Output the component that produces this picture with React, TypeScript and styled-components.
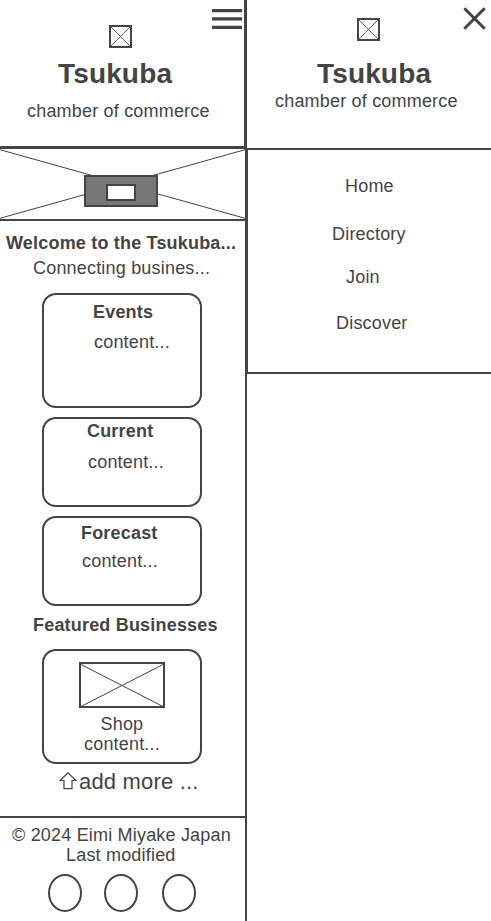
import React from 'react';
import styled, { createGlobalStyle } from 'styled-components';

const ink = '#444444';

const GlobalStyle = createGlobalStyle`
  * { box-sizing: border-box; }
  body { margin: 0; background: #fff; overflow: hidden; }
`;

const Page = styled.div`
  display: grid;
  grid-template-columns: 247px 1fr;
  height: 921px;
  overflow: hidden;
  background: #fff;
  color: ${ink};
  font-family: 'Liberation Sans', Arial, sans-serif;
  font-size: 18px;
  line-height: 20px;
`;

const Screen = styled.div`
  display: flex;
  flex-direction: column;
  min-width: 0;
`;

const Header = styled.header<{ $menu?: boolean }>`
  position: relative;
  flex: none;
  display: flex;
  flex-direction: column;
  height: ${p => (p.$menu ? 150 : 149)}px;
  padding-top: ${p => (p.$menu ? 18 : 25)}px;
  border: 0 solid ${ink};
  border-width: ${p => (p.$menu ? '0 0 2px 0' : '0 3px 3px 0')};
`;

const Logo = styled.svg<{ $left: number }>`
  display: block;
  flex: none;
  width: 23px;
  height: 23px;
  margin-left: ${p => p.$left}px;
`;

const IconButton = styled.button<{ $top: number; $right: number }>`
  position: absolute;
  top: ${p => p.$top}px;
  right: ${p => p.$right}px;
  padding: 0;
  border: 0;
  background: none;
  color: inherit;
  line-height: 0;
`;

const Brand = styled.h1<{ $top: number; $left: number }>`
  margin: ${p => p.$top}px 0 0 ${p => p.$left}px;
  font-size: 28px;
  line-height: 32px;
  letter-spacing: 0.15px;
  white-space: nowrap;
`;

const Line = styled.p<{ $top?: number; $left: number; $track?: number }>`
  margin: ${p => p.$top ?? 0}px 0 0 ${p => p.$left}px;
  letter-spacing: ${p => p.$track ?? 0.19}px;
  white-space: nowrap;
`;

const Heading = styled(Line).attrs({ as: 'h2' })`
  font-size: 18px;
  font-weight: bold;
`;

const Body = styled.main`
  flex: 1;
  display: flex;
  flex-direction: column;
  border-right: 2px solid ${ink};
`;

const Hero = styled.section`
  display: grid;
  height: 72px;
  border-bottom: 2px solid ${ink};
  > * { grid-area: 1 / 1; }
`;

const HeroLines = styled.svg`
  display: block;
  width: 245px;
  height: 70px;
`;

const HeroBadge = styled.div`
  display: flex;
  width: 74px;
  height: 32px;
  margin: 26px 0 0 84px;
  padding: 7px 0 0 20px;
  border: 2px solid ${ink};
  background: #777;
`;

const HeroSlot = styled.div`
  width: 30px;
  height: 17px;
  border: 2px solid ${ink};
  background: #fff;
`;

const Card = styled.article<{ $top: number; $height: number }>`
  flex: none;
  width: 160px;
  height: ${p => p.$height}px;
  margin: ${p => p.$top}px 0 0 42px;
  border: 2px solid ${ink};
  border-radius: 14px;
`;

const Thumb = styled.svg`
  display: block;
  width: 86px;
  height: 46px;
  margin: 11px 0 0 35px;
`;

const AddMore = styled.div`
  display: flex;
  margin: 5px 0 0 59px;
  font-size: 22px;
  line-height: 26px;
  letter-spacing: 0.18px;
  white-space: nowrap;
`;

const Arrow = styled.svg`
  flex: none;
  width: 18px;
  height: 20px;
  margin: 2px 2px 0 0;
`;

const Footer = styled.footer`
  height: 105px;
  margin-top: auto;
  padding-top: 7px;
  border-top: 2px solid ${ink};
`;

const Socials = styled.div`
  display: grid;
  grid-template-columns: 56px 58px 34px;
  margin: 9px 0 0 48px;
`;

const Social = styled.span`
  width: 34px;
  height: 38px;
  border: 2px solid ${ink};
  border-radius: 50%;
`;

const Nav = styled.nav`
  height: 224px;
  padding-top: 26px;
  border: 0 solid ${ink};
  border-width: 0 0 2px 1px;
`;

const LogoMark = ({ left }: { left: number }) => (
  <Logo $left={left} viewBox="0 0 23 23" fill="none" stroke={ink}>
    <rect x="1" y="1" width="21" height="21" strokeWidth="2" />
    <path d="M2 2l19 19M21 2L2 21" strokeWidth="0.8" />
  </Logo>
);

const cards = [
  { title: 'Events', top: 15, height: 115, titleTop: 7, titleLeft: 49, textTop: 10, textLeft: 50 },
  { title: 'Current', top: 9, height: 90, titleTop: 2, titleLeft: 43, textTop: 11, textLeft: 44 },
  { title: 'Forecast', top: 9, height: 90, titleTop: 5, titleLeft: 37, textTop: 8, textLeft: 38 },
];

const links = [
  { label: 'Home', top: 0, left: 97 },
  { label: 'Directory', top: 28, left: 84 },
  { label: 'Join', top: 23, left: 98 },
  { label: 'Discover', top: 26, left: 88 },
];

export default function App() {
  return (
    <>
      <GlobalStyle />
      <Page>
        <Screen>
          <Header>
            <IconButton $top={9} $right={2} aria-label="Open menu">
              <svg width="30" height="20" viewBox="0 0 30 20" fill={ink}>
                <path d="M0 0h30v3.3H0zM0 8.2h30v3.4H0zM0 16.7h30v3.3H0z" />
              </svg>
            </IconButton>
            <LogoMark left={109} />
            <Brand $top={10} $left={58}>Tsukuba</Brand>
            <Line $top={11} $left={27}>chamber of commerce</Line>
          </Header>
          <Body>
            <Hero>
              <HeroLines viewBox="0 0 245 70" fill="none" stroke={ink}>
                <path d="M0 0.7L245 69.3M245 0.7L0 69.3" />
              </HeroLines>
              <HeroBadge><HeroSlot /></HeroBadge>
            </Hero>
            <Heading $top={12} $left={6}>Welcome to the Tsukuba...</Heading>
            <Line $top={5} $left={33}>Connecting busines...</Line>
            {cards.map(c => (
              <Card key={c.title} $top={c.top} $height={c.height}>
                <Heading $top={c.titleTop} $left={c.titleLeft}>{c.title}</Heading>
                <Line $top={c.textTop} $left={c.textLeft}>content...</Line>
              </Card>
            ))}
            <Heading $top={9} $left={33}>Featured Businesses</Heading>
            <Card $top={14} $height={115}>
              <Thumb viewBox="0 0 86 46" fill="none" stroke={ink}>
                <rect x="1" y="1" width="84" height="44" strokeWidth="2" />
                <path d="M2 2.5L84 44.5M84 2.5L2 44.5" />
              </Thumb>
              <Line $top={6} $left={56.5}>Shop</Line>
              <Line $left={40}>content...</Line>
            </Card>
            <AddMore>
              <Arrow viewBox="0 0 18 20" fill="none" stroke={ink} strokeWidth="1.2">
                <path d="M9 1.8L1.2 9.5H5V17.6H13V9.5H16.8Z" />
              </Arrow>
              add more ...
            </AddMore>
            <Footer>
              <Line $left={12}>© 2024 Eimi Miyake Japan</Line>
              <Line $left={66}>Last modified</Line>
              <Socials><Social /><Social /><Social /></Socials>
            </Footer>
          </Body>
        </Screen>
        <Screen>
          <Header $menu>
            <IconButton $top={7} $right={5} aria-label="Close menu">
              <svg width="23" height="23" viewBox="0 0 23 23" fill="none" stroke={ink} strokeWidth="3">
                <path d="M1.3 1.3L21.7 21.7M21.7 1.3L1.3 21.7" />
              </svg>
            </IconButton>
            <LogoMark left={110} />
            <Brand $top={17} $left={70}>Tsukuba</Brand>
            <Line $top={1} $left={28}>chamber of commerce</Line>
          </Header>
          <Nav>
            {links.map(l => (
              <Line key={l.label} $top={l.top} $left={l.left}>{l.label}</Line>
            ))}
          </Nav>
        </Screen>
      </Page>
    </>
  );
}
